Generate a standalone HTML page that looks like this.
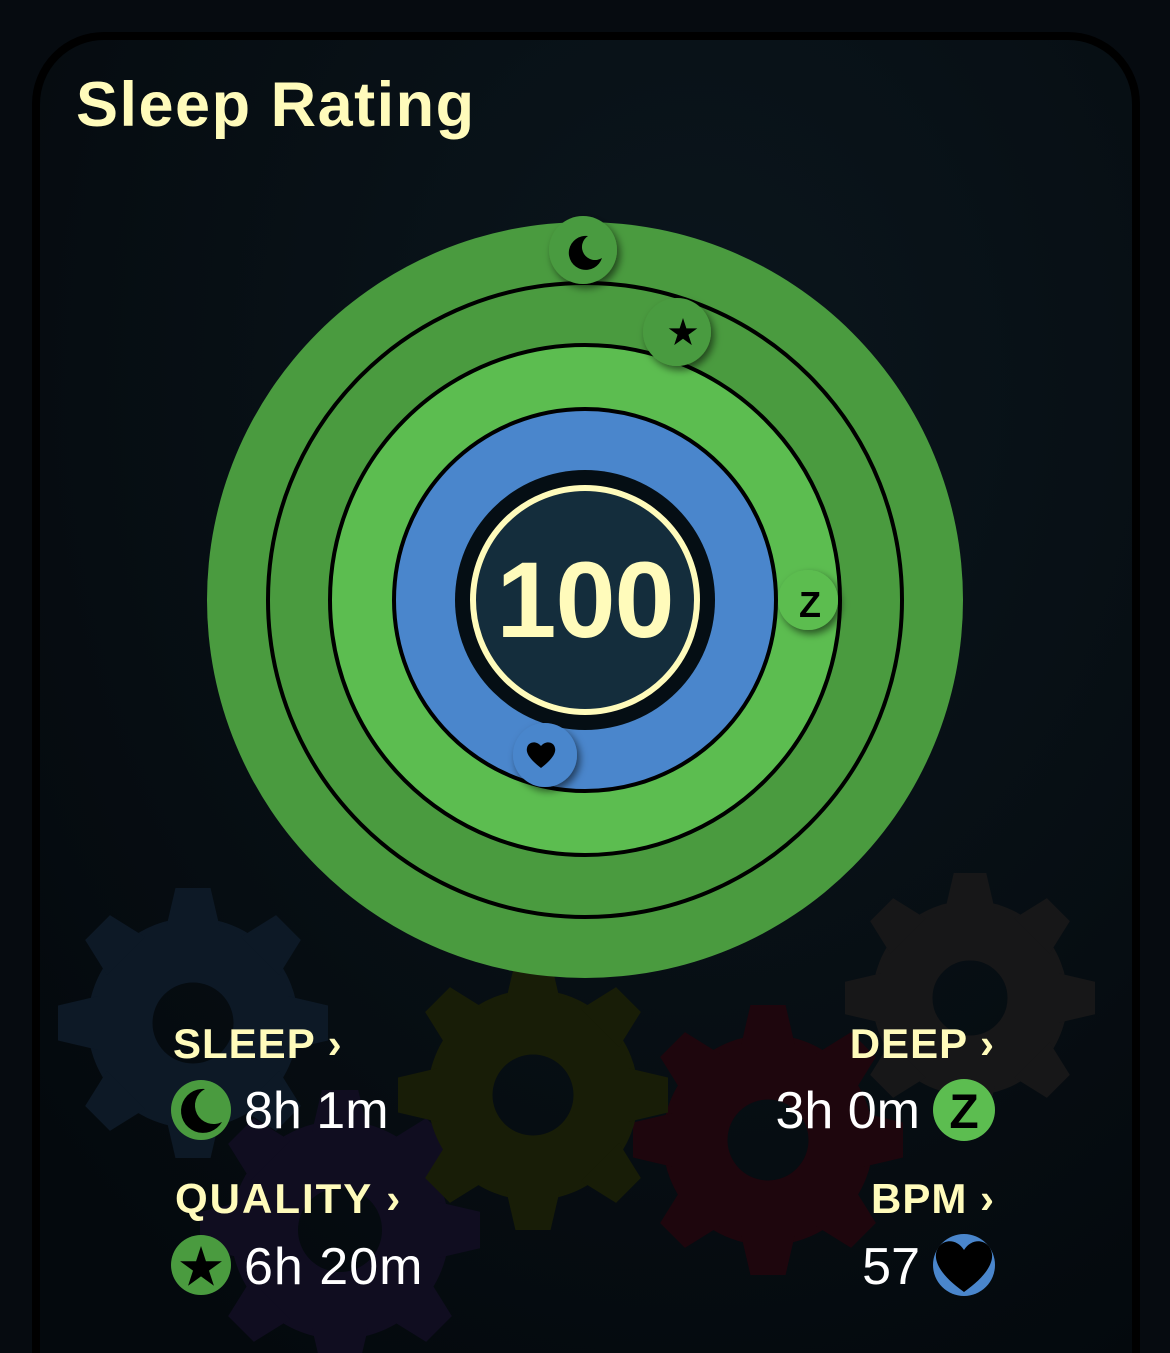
<!DOCTYPE html>
<html><head><meta charset="utf-8"><style>
html,body{margin:0;padding:0;background:#060b10;width:1170px;height:1353px;overflow:hidden}
svg{display:block}
text{font-family:"Liberation Sans",sans-serif}
</style></head><body>
<svg width="1170" height="1353" viewBox="0 0 1170 1353" xmlns="http://www.w3.org/2000/svg">
<defs>
<radialGradient id="cg" cx="0.6" cy="0.25" r="0.8">
<stop offset="0" stop-color="#0b161d"/><stop offset="1" stop-color="#04090d"/>
</radialGradient>
<clipPath id="cl"><rect x="0" y="0" width="1170" height="1353"/></clipPath>
<filter id="sh" x="-50%" y="-50%" width="200%" height="200%"><feDropShadow dx="3" dy="4" stdDeviation="4" flood-color="#000" flood-opacity="0.55"/></filter>
<path id="star" d="M0 -1L0.225 -0.309L0.951 -0.309L0.363 0.118L0.588 0.809L0 0.382L-0.588 0.809L-0.363 0.118L-0.951 -0.309L-0.225 -0.309Z"/>
<symbol id="gear" viewBox="-1 -1 2 2">
<circle r="0.54" fill="none" stroke="currentColor" stroke-width="0.48"/>
<g fill="currentColor">
<path id="tooth" d="M-0.2 -0.7L-0.13 -1L0.13 -1L0.2 -0.7Z"/>
<use href="#tooth" transform="rotate(45)"/>
<use href="#tooth" transform="rotate(90)"/>
<use href="#tooth" transform="rotate(135)"/>
<use href="#tooth" transform="rotate(180)"/>
<use href="#tooth" transform="rotate(225)"/>
<use href="#tooth" transform="rotate(270)"/>
<use href="#tooth" transform="rotate(315)"/>
</g>
</symbol>
</defs>
<g clip-path="url(#cl)">
<rect x="0" y="0" width="1170" height="1353" fill="#060b10"/>
<rect x="36" y="36" width="1100" height="1400" rx="68" fill="url(#cg)" stroke="#000" stroke-width="8"/>
<text x="76" y="126" font-size="63" font-weight="bold" fill="#fffbbb" letter-spacing="1.5">Sleep Rating</text>

<!-- gears -->
<use href="#gear" x="58" y="888" width="270" height="270" style="color:#0d1926"/>
<use href="#gear" x="845" y="873" width="250" height="250" style="color:#171718"/>
<use href="#gear" x="200" y="1090" width="280" height="280" style="color:#100d20"/>
<use href="#gear" x="633" y="1005" width="270" height="270" style="color:#1e060d"/>
<use href="#gear" x="398" y="960" width="270" height="270" style="color:#181d07"/>

<!-- rings -->
<circle cx="585" cy="600" r="378" fill="#4a9b3f"/>
<circle cx="585" cy="600" r="317" fill="none" stroke="#000" stroke-width="4"/>
<circle cx="585" cy="600" r="255" fill="#5cbd50" stroke="#000" stroke-width="4"/>
<circle cx="585" cy="600" r="191" fill="#4a86cc" stroke="#000" stroke-width="4"/>
<circle cx="585" cy="600" r="130" fill="#050e14"/>
<circle cx="585" cy="600" r="112" fill="#142d3c" stroke="#fffbbb" stroke-width="6"/>
<text x="585" y="637" font-size="108" font-weight="bold" fill="#fffbbb" text-anchor="middle" letter-spacing="-1">100</text>

<!-- ring icons -->
<g filter="url(#sh)"><circle cx="583" cy="250" r="34" fill="#4a9b3f"/></g>
<path d="M602 258 A17 17 0 1 1 588 236 A13 13 0 0 0 602 258Z" fill="#000"/>
<g filter="url(#sh)"><circle cx="677" cy="332" r="34" fill="#4a9b3f"/></g>
<use href="#star" transform="translate(683 333) scale(15)" fill="#000"/>
<g filter="url(#sh)"><circle cx="808" cy="600" r="30" fill="#5cbd50"/></g>
<text x="810" y="617" font-size="36" font-weight="bold" text-anchor="middle" fill="#000">Z</text>
<g filter="url(#sh)"><circle cx="545" cy="755" r="32" fill="#4a86cc"/></g>
<path d="M541 768 C528 758 526 752 527 748 C528 742 536 740 541 746 C546 740 554 742 555 748 C556 752 554 758 541 768Z" fill="#000"/>

<!-- stats -->
<g font-weight="bold" font-size="42" fill="#fffbbb" letter-spacing="1">
<text x="173" y="1058">SLEEP ›</text>
<text x="175" y="1213" letter-spacing="2">QUALITY ›</text>
<text x="995" y="1058" text-anchor="end">DEEP ›</text>
<text x="995" y="1213" text-anchor="end">BPM ›</text>
</g>
<g font-size="52" fill="#fff">
<text x="244" y="1128">8h 1m</text>
<text x="244" y="1284" letter-spacing="1">6h 20m</text>
<text x="920" y="1128" text-anchor="end">3h 0m</text>
<text x="920" y="1284" text-anchor="end">57</text>
</g>
<circle cx="201" cy="1110" r="30" fill="#4a9b3f"/>
<path d="M222 1122 A22 22 0 1 1 205 1089 A16 16 0 0 0 222 1122Z" fill="#000"/>
<circle cx="201" cy="1265" r="30" fill="#4a9b3f"/>
<use href="#star" transform="translate(201 1268) scale(22)" fill="#000"/>
<circle cx="964" cy="1110" r="31" fill="#5cbd50"/>
<text x="964" y="1128" font-size="48" font-weight="bold" text-anchor="middle" fill="#000">Z</text>
<circle cx="964" cy="1265" r="31" fill="#4a86cc"/>
<path d="M964 1292 C940 1275 935 1262 936 1254 C938 1240 955 1236 964 1250 C973 1236 990 1240 992 1254 C993 1262 988 1275 964 1292Z" fill="#000"/>
</g>
</svg>
</body></html>
